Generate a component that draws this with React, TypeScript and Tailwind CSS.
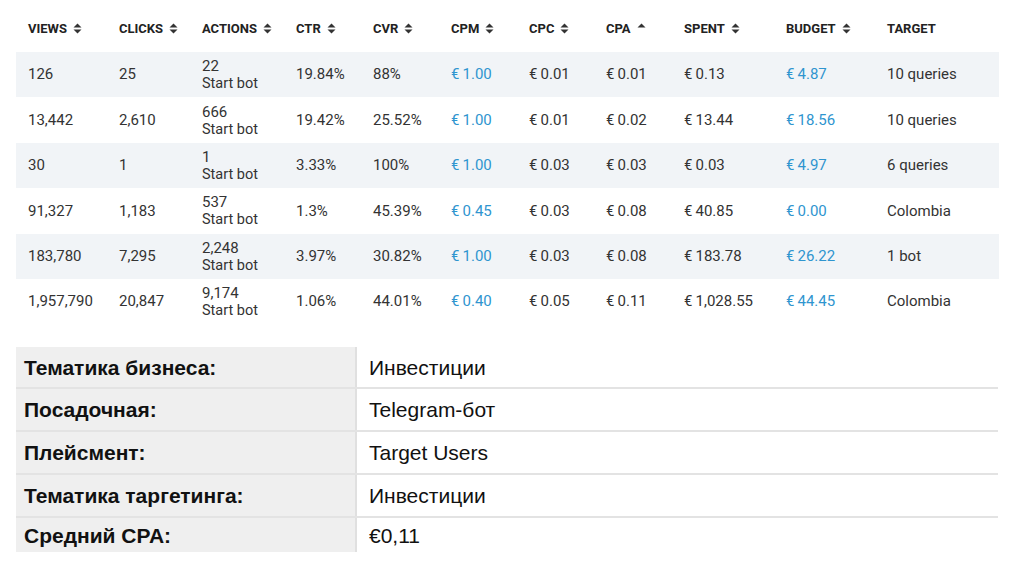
const cols = "grid w-[983px] grid-cols-[91px_83px_94px_77px_78px_78px_77px_78px_102px_101px_124px]";

type Row = {
  views: string;
  clicks: string;
  actions: string;
  ctr: string;
  cvr: string;
  cpm: string;
  cpc: string;
  cpa: string;
  spent: string;
  budget: string;
  target: string;
};

const rows: Row[] = [
  { views: "126", clicks: "25", actions: "22", ctr: "19.84%", cvr: "88%", cpm: "1.00", cpc: "0.01", cpa: "0.01", spent: "0.13", budget: "4.87", target: "10 queries" },
  { views: "13,442", clicks: "2,610", actions: "666", ctr: "19.42%", cvr: "25.52%", cpm: "1.00", cpc: "0.01", cpa: "0.02", spent: "13.44", budget: "18.56", target: "10 queries" },
  { views: "30", clicks: "1", actions: "1", ctr: "3.33%", cvr: "100%", cpm: "1.00", cpc: "0.03", cpa: "0.03", spent: "0.03", budget: "4.97", target: "6 queries" },
  { views: "91,327", clicks: "1,183", actions: "537", ctr: "1.3%", cvr: "45.39%", cpm: "0.45", cpc: "0.03", cpa: "0.08", spent: "40.85", budget: "0.00", target: "Colombia" },
  { views: "183,780", clicks: "7,295", actions: "2,248", ctr: "3.97%", cvr: "30.82%", cpm: "1.00", cpc: "0.03", cpa: "0.08", spent: "183.78", budget: "26.22", target: "1 bot" },
  { views: "1,957,790", clicks: "20,847", actions: "9,174", ctr: "1.06%", cvr: "44.01%", cpm: "0.40", cpc: "0.05", cpa: "0.11", spent: "1,028.55", budget: "44.45", target: "Colombia" },
];

const headers = [
  { label: "VIEWS", sort: "both" },
  { label: "CLICKS", sort: "both" },
  { label: "ACTIONS", sort: "both" },
  { label: "CTR", sort: "both" },
  { label: "CVR", sort: "both" },
  { label: "CPM", sort: "both" },
  { label: "CPC", sort: "both" },
  { label: "CPA", sort: "up" },
  { label: "SPENT", sort: "both" },
  { label: "BUDGET", sort: "both" },
  { label: "TARGET", sort: "none" },
];

const details = [
  { label: "Тематика бизнеса:", value: "Инвестиции", h: "h-[40px]" },
  { label: "Посадочная:", value: "Telegram-бот", h: "h-[41px]" },
  { label: "Плейсмент:", value: "Target Users", h: "h-[41px]" },
  { label: "Тематика таргетинга:", value: "Инвестиции", h: "h-[41px]" },
  { label: "Средний CPA:", value: "€0,11", h: "h-[34px]" },
];

function SortIcon({ sort }: { sort: string }) {
  if (sort === "none") return null;
  return (
    <svg width="9" height="11" viewBox="0 0 9 11" className="ml-[6px] text-[#333]">
      <path d="M4.5 0.5 L8.5 4.5 H0.5 Z" fill="currentColor" />
      {sort === "both" && <path d="M4.5 10.5 L8.5 6.5 H0.5 Z" fill="currentColor" />}
    </svg>
  );
}

const Euro = ({ v }: { v: string }) => <span>€&thinsp;{v}</span>;

export default function App() {
  return (
    <div className="w-[1024px] h-[567px] bg-white px-4 overflow-hidden font-['Roboto',sans-serif] text-[#333]">
      {/* stats table */}
      <div className={`${cols} h-[52px] pt-[5px] items-center text-[13px] font-bold text-[#222]`}>
        {headers.map((h) => (
          <div key={h.label} className="pl-3 flex items-center">
            {h.label}
            <SortIcon sort={h.sort} />
          </div>
        ))}
      </div>

      {rows.map((r, i) => (
        <div
          key={i}
          className={`${cols} h-[45.4px] items-center text-[15px] ${i % 2 === 0 ? "bg-[#f1f4f7]" : "bg-white"}`}
        >
          <div className="pl-3">{r.views}</div>
          <div className="pl-3">{r.clicks}</div>
          <div className="pl-3 flex flex-col leading-[18px] pt-[1px]">
            <span>{r.actions}</span>
            <span className="text-[14.5px]">Start bot</span>
          </div>
          <div className="pl-3">{r.ctr}</div>
          <div className="pl-3">{r.cvr}</div>
          <div className="pl-3 text-[#2f95cf]"><Euro v={r.cpm} /></div>
          <div className="pl-3"><Euro v={r.cpc} /></div>
          <div className="pl-3"><Euro v={r.cpa} /></div>
          <div className="pl-3"><Euro v={r.spent} /></div>
          <div className="pl-3 text-[#2f95cf]"><Euro v={r.budget} /></div>
          <div className="pl-3">{r.target}</div>
        </div>
      ))}

      {/* details table */}
      <div className="mt-[23px] w-[982px] font-['Liberation_Sans',Arial,sans-serif] text-[21px] text-[#111]">
        {details.map((d, i) => (
          <div
            key={d.label}
            className={`flex ${i < details.length - 1 ? "border-b-2 border-[#e3e3e3]" : ""}`}
          >
            <div className={`${d.h} w-[341px] bg-[#efefef] border-r-2 border-[#e0e0e0] pl-2 flex items-center font-bold`}>
              {d.label}
            </div>
            <div className={`${d.h} flex-1 pl-3 flex items-center`}>{d.value}</div>
          </div>
        ))}
      </div>
    </div>
  );
}
